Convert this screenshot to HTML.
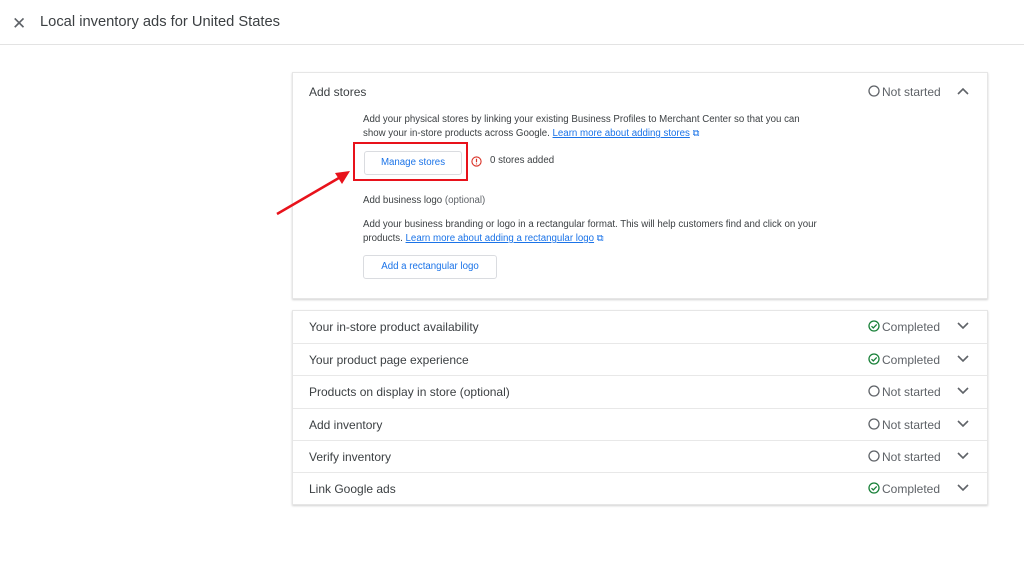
<!DOCTYPE html>
<html><head><meta charset="utf-8"><style>
*{margin:0;padding:0;box-sizing:border-box}
body{width:1024px;height:573px;background:#fff;font-family:"Liberation Sans",Arial,sans-serif;color:#3c4043;position:relative;overflow:hidden}
.hdr{position:absolute;left:0;top:0;width:1024px;height:45px;border-bottom:1px solid #e3e3e3}
.hdr .x{position:absolute;left:12px;top:14px;font-size:17px;color:#5f6368}
.hdr .t{position:absolute;left:40px;top:14px;font-size:14.7px;color:#3c4043}
.card{position:absolute;left:292px;width:696px;background:#fff;border:1px solid #e6e6e6;box-shadow:0 1px 2px rgba(0,0,0,.18)}
.abs{position:absolute;white-space:nowrap}
.small{font-size:9.7px;color:#3c4043;line-height:14px}
a{color:#1a73e8;text-decoration:underline}
.btn{position:absolute;border:1px solid #dadce0;border-radius:3px;color:#1a73e8;font-size:9.7px;text-align:center;background:#fff}
.row{position:absolute;left:0;width:694px;height:32px;border-top:1px solid #e8e8e8}
.row:first-child{border-top:none}
.row .n{position:absolute;left:16px;top:9px;font-size:12px}
.st{position:absolute;left:575px;top:9px;font-size:12px;color:#5f6368}
.st svg{position:absolute;left:0;top:0}
.st span{position:absolute;left:14px;top:0;white-space:nowrap}
.chev{position:absolute;left:664px;top:11px}
</style></head><body>
<div class="hdr"><div class="x">✕</div><div class="t">Local inventory ads for United States</div></div>

<div class="card" style="top:72px;height:227px">
  <div class="abs" style="left:16px;top:12px;font-size:12px">Add stores</div>
  <div class="st" style="left:575px;top:12px"><svg width="12" height="12" viewBox="0 0 12 12"><circle cx="6" cy="6" r="5" fill="none" stroke="#5f6368" stroke-width="1.3"/></svg><span>Not started</span></div>
  <svg class="chev" style="top:14px" width="12" height="8" viewBox="0 0 12 8"><path d="M1 7L6 2L11 7" fill="none" stroke="#5f6368" stroke-width="1.6"/></svg>
  <div class="abs small" style="left:70px;top:40px">Add your physical stores by linking your existing Business Profiles to Merchant Center so that you can<br>show your in-store products across Google. <a>Learn more about adding stores</a> <span style="color:#1a73e8">⧉</span></div>
  <div class="btn" style="left:71px;top:78px;width:98px;height:24px;line-height:22px">Manage stores</div>
  <svg class="abs" style="left:178px;top:83px" width="11" height="11" viewBox="0 0 12 12"><circle cx="6" cy="6" r="5" fill="none" stroke="#d93025" stroke-width="1.2"/><path d="M6 3v3.8M6 8.2v1" stroke="#d93025" stroke-width="1.3"/></svg>
  <div class="abs small" style="left:197px;top:81px">0 stores added</div>
  <div class="abs small" style="left:70px;top:121px">Add business logo <span style="color:#5f6368">(optional)</span></div>
  <div class="abs small" style="left:70px;top:145px">Add your business branding or logo in a rectangular format. This will help customers find and click on your<br>products. <a>Learn more about adding a rectangular logo</a> <span style="color:#1a73e8">⧉</span></div>
  <div class="btn" style="left:70px;top:182px;width:134px;height:24px;line-height:22px">Add a rectangular logo</div>
</div>
<div class="abs" style="left:353px;top:142px;width:115px;height:39px;border:2.5px solid #e8121b"></div>
<svg class="abs" style="left:270px;top:160px" width="90" height="60" viewBox="0 0 90 60"><path d="M7 54L74 15" stroke="#e8121b" stroke-width="2.5"/><path d="M80 11L65 13L72 24Z" fill="#e8121b"/></svg>

<div class="card" style="top:310px;height:195px">
  <div class="row" style="top:0"><div class="n">Your in-store product availability</div><div class="st"><svg width="12" height="12" viewBox="0 0 12 12"><circle cx="6" cy="6" r="5" fill="none" stroke="#188038" stroke-width="1.3"/><path d="M3.5 6.2L5.3 8L8.7 4.4" fill="none" stroke="#188038" stroke-width="1.3"/></svg><span>Completed</span></div><svg class="chev" width="12" height="8" viewBox="0 0 12 8"><path d="M1 1L6 6L11 1" fill="none" stroke="#5f6368" stroke-width="1.6"/></svg></div>
  <div class="row" style="top:32px"><div class="n">Your product page experience</div><div class="st"><svg width="12" height="12" viewBox="0 0 12 12"><circle cx="6" cy="6" r="5" fill="none" stroke="#188038" stroke-width="1.3"/><path d="M3.5 6.2L5.3 8L8.7 4.4" fill="none" stroke="#188038" stroke-width="1.3"/></svg><span>Completed</span></div><svg class="chev" width="12" height="8" viewBox="0 0 12 8"><path d="M1 1L6 6L11 1" fill="none" stroke="#5f6368" stroke-width="1.6"/></svg></div>
  <div class="row" style="top:64px"><div class="n">Products on display in store (optional)</div><div class="st"><svg width="12" height="12" viewBox="0 0 12 12"><circle cx="6" cy="6" r="5" fill="none" stroke="#5f6368" stroke-width="1.3"/></svg><span>Not started</span></div><svg class="chev" width="12" height="8" viewBox="0 0 12 8"><path d="M1 1L6 6L11 1" fill="none" stroke="#5f6368" stroke-width="1.6"/></svg></div>
  <div class="row" style="top:97px"><div class="n">Add inventory</div><div class="st"><svg width="12" height="12" viewBox="0 0 12 12"><circle cx="6" cy="6" r="5" fill="none" stroke="#5f6368" stroke-width="1.3"/></svg><span>Not started</span></div><svg class="chev" width="12" height="8" viewBox="0 0 12 8"><path d="M1 1L6 6L11 1" fill="none" stroke="#5f6368" stroke-width="1.6"/></svg></div>
  <div class="row" style="top:129px"><div class="n">Verify inventory</div><div class="st"><svg width="12" height="12" viewBox="0 0 12 12"><circle cx="6" cy="6" r="5" fill="none" stroke="#5f6368" stroke-width="1.3"/></svg><span>Not started</span></div><svg class="chev" width="12" height="8" viewBox="0 0 12 8"><path d="M1 1L6 6L11 1" fill="none" stroke="#5f6368" stroke-width="1.6"/></svg></div>
  <div class="row" style="top:161px"><div class="n">Link Google ads</div><div class="st"><svg width="12" height="12" viewBox="0 0 12 12"><circle cx="6" cy="6" r="5" fill="none" stroke="#188038" stroke-width="1.3"/><path d="M3.5 6.2L5.3 8L8.7 4.4" fill="none" stroke="#188038" stroke-width="1.3"/></svg><span>Completed</span></div><svg class="chev" width="12" height="8" viewBox="0 0 12 8"><path d="M1 1L6 6L11 1" fill="none" stroke="#5f6368" stroke-width="1.6"/></svg></div>
</div>
</body></html>
